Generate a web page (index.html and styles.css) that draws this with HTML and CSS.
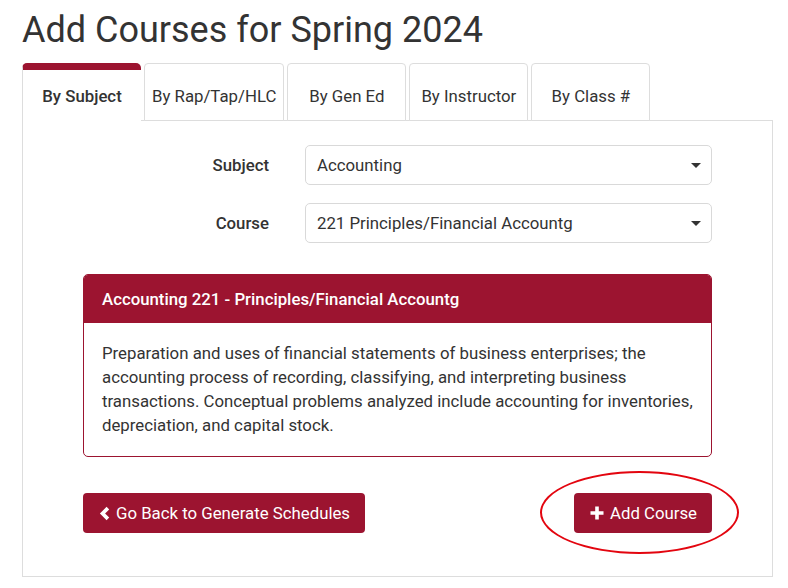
FILE: index.html
```html
<!DOCTYPE html>
<html lang="en">

<head>
  <meta charset="UTF-8">
  <meta name="viewport" content="width=device-width, initial-scale=1.0">
  <title>Add Courses</title>
  <link rel="stylesheet" href="styles.css">
</head>

<body>
  <h1 class="title">Add Courses for Spring 2024</h1>

  <div class="tabs">
    <div class="tab active">By Subject</div>
    <div class="tab">By Rap/Tap/HLC</div>
    <div class="tab">By Gen Ed</div>
    <div class="tab">By Instructor</div>
    <div class="tab">By Class #</div>
  </div>

  <section class="panel">
    <div class="form">
      <label class="form-label">Subject</label>
      <div class="select">
        <span>Accounting</span>
        <span class="caret"></span>
      </div>
      <label class="form-label">Course</label>
      <div class="select">
        <span>221 Principles/Financial Accountg</span>
        <span class="caret"></span>
      </div>
    </div>

    <div class="card">
      <div class="card-head">Accounting 221 - Principles/Financial Accountg</div>
      <div class="card-body">
        Preparation and uses of financial statements of business enterprises; the
        accounting process of recording, classifying, and interpreting business
        transactions. Conceptual problems analyzed include accounting for inventories,
        depreciation, and capital stock.
      </div>
    </div>

    <div class="actions">
      <button class="btn">
        <svg class="icon" width="11" height="15" viewBox="0 0 11 15">
          <path d="M7.6 0.8 L10.2 3.4 L6.1 7.5 L10.2 11.6 L7.6 14.2 L0.9 7.5 Z" fill="#fff" />
        </svg>
        Go Back to Generate Schedules
      </button>
      <div class="add-wrap">
        <button class="btn">
          <svg class="icon" width="14" height="14" viewBox="0 0 14 14">
            <path d="M5.2 0.5 H8.8 V5.2 H13.5 V8.8 H8.8 V13.5 H5.2 V8.8 H0.5 V5.2 H5.2 Z" fill="#fff" />
          </svg>
          Add Course
        </button>
        <!-- 红圈标注 -->
        <div class="circle"></div>
      </div>
    </div>
  </section>
</body>

</html>
```

FILE: styles.css
```css
body {
  margin: 0;
  padding: 0 15px 0 22px;
  font-family: Roboto, "Liberation Sans", sans-serif;
  font-size: 16.8px;
  color: #333;
  background: #fff;
}

.title {
  margin: 0;
  padding-top: 8px;
  height: 55px;
  font-size: 36px;
  font-weight: 400;
  line-height: 44px;
  color: #333;
}

.tabs {
  display: flex;
  gap: 3px;
  margin-bottom: -1px;
  position: relative;
}

.tab {
  box-sizing: border-box;
  min-width: 119px;
  padding: 20px 7px 12px;
  line-height: 24px;
  text-align: center;
  color: #333;
  border: 1px solid #ddd;
  border-radius: 4px 4px 0 0;
  background: #fff;
}

.tab.active {
  padding-top: 14px;
  padding-bottom: 13px;
  font-weight: 500;
  border: 0;
  border-top: 7px solid #9c1430;
  border-left: 1px solid #ddd;
  border-radius: 5px 5px 0 0;
}

.panel {
  width: 751px;
  box-sizing: border-box;
  padding: 24px 60px 43px 60px;
  border: 1px solid #ddd;
}

.form {
  display: grid;
  grid-template-columns: 186px 1fr;
  column-gap: 36px;
  row-gap: 18px;
  align-items: center;
}

.form-label {
  text-align: right;
  font-weight: 500;
  color: #333;
}

.select {
  height: 40px;
  box-sizing: border-box;
  display: flex;
  align-items: center;
  justify-content: space-between;
  padding: 0 10px 0 11px;
  border: 1px solid #d9d9d9;
  border-radius: 5px;
  color: #333;
}

.caret {
  width: 0;
  height: 0;
  border-left: 5px solid transparent;
  border-right: 5px solid transparent;
  border-top: 5px solid #333;
}

.card {
  margin-top: 31px;
  border: 1px solid #9c1430;
  border-radius: 5px;
  overflow: hidden;
}

.card-head {
  padding: 12px 18px;
  line-height: 24px;
  font-weight: 500;
  color: #fff;
  background: #9c1430;
}

.card-body {
  padding: 18px 18px 19px;
  line-height: 24px;
  color: #333;
}

.actions {
  display: flex;
  justify-content: space-between;
  margin-top: 36px;
}

.btn {
  display: flex;
  align-items: center;
  gap: 6px;
  height: 40px;
  padding: 0 15px 0 16px;
  font-family: inherit;
  font-size: 16.8px;
  color: #fff;
  background: #9c1430;
  border: 0;
  border-radius: 4px;
}

.add-wrap {
  position: relative;
}

.circle {
  position: absolute;
  left: -34px;
  right: -27px;
  top: -22px;
  bottom: -21px;
  border: 2px solid #e3050f;
  border-radius: 50%;
}
```
